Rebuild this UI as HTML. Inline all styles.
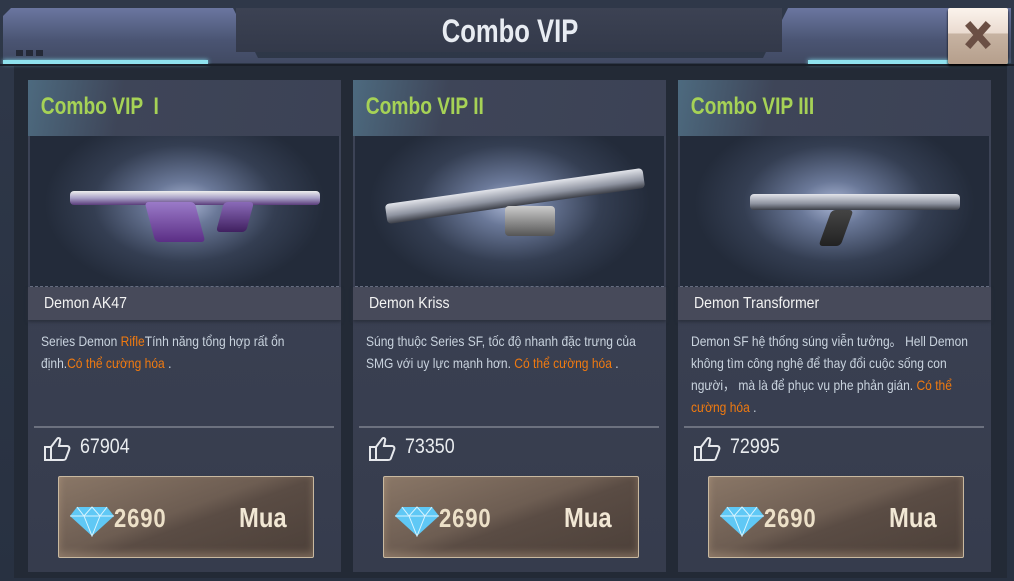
<!DOCTYPE html>
<html><head><meta charset="utf-8"><style>
*{margin:0;padding:0;box-sizing:border-box}
body{width:1014px;height:581px;overflow:hidden;background:#2b3444;font-family:"Liberation Sans Narrow","Liberation Sans",sans-serif;position:relative}
.frame{position:absolute;left:0;top:0;width:1014px;height:581px;background:linear-gradient(#2f3849,#283141)}
.topbar{position:absolute;left:3px;top:8px;width:1008px;height:55px;background:linear-gradient(#6b76a0,#4a5472 60%,#414a63);clip-path:polygon(0 8px,8px 0,230px 0,255px 50px,760px 50px,785px 0,1008px 0,1008px 55px,0 55px)}
.titlebg{position:absolute;left:236px;top:8px;width:546px;height:44px;background:linear-gradient(#3c4253,#33394a)}
.cyan{position:absolute;top:60px;height:4px;background:#8fe2ee;box-shadow:0 0 4px #7fd8ea}
.sep{position:absolute;left:0;top:64px;width:1014px;height:2px;background:#1a1f29}
.dots{position:absolute;top:50px;width:7px;height:6px;background:#252a37}
.title{position:absolute;left:380px;width:260px;top:13px;text-align:center;color:#e8ecf2;font-size:32px;font-weight:bold;transform:scaleX(.8)}
.close{position:absolute;left:948px;top:8px;width:60px;height:56px;background:linear-gradient(#fbf3ec,#eadbd0 45%,#c7b3a2 46%,#b59f8c);border-radius:2px;box-shadow:0 2px 2px #000}
.inner{position:absolute;left:14px;top:66px;width:993px;height:512px;background:#232a36}
.card{position:absolute;top:80px;width:313px;height:492px;background:linear-gradient(#3e4558,#3a4052 40%,#363c4d)}
.card .hd{height:56px;background:linear-gradient(100deg,#4d6a7f 0%,#3e4558 30%,#3c4255)}
.card .hd span{display:block;padding:13px 0 0 16px;color:#a6d256;font-size:24px;font-weight:bold;transform:scaleX(.8);transform-origin:left}
.img{height:151px;margin:0 2px;background:radial-gradient(ellipse 140px 90px at 50% 45%,#aab6d4 0%,#6a7898 25%,#343e52 65%,#232b3a 100%);border-bottom:1px dashed #666d80;position:relative;overflow:hidden}
.gun{position:absolute;background:linear-gradient(#e2e4ea,#8e93a0 60%,#3c3f48);border-radius:4px}
.nm{height:33px;background:#474a5a;color:#f3f3f3;font-size:16px;padding:8px 0 0 16px;box-shadow:0 2px 3px #2a2f3c}
.nm span{display:inline-block;transform:scaleX(.88);transform-origin:left}
.ds{padding:10px 0 0 13px;color:#c9d3de;font-size:14px;line-height:22px;height:106px;white-space:nowrap}
.ds span.w{display:inline-block;transform:scaleX(.86);transform-origin:left}
.o{color:#f07a10}
.line{margin:0 7px 0 6px;height:2px;background:#6c717f}
.lk{height:36px;color:#e9ecef;font-size:21px;padding:7px 0 0 52px;position:relative}
.lk b{display:inline-block;transform:scaleX(.85);transform-origin:left;font-weight:normal}
.lk svg{position:absolute;left:14px;top:5px}
.btn{position:absolute;left:30px;top:396px;width:256px;height:82px;border:1px solid #c9b9a0;border-radius:2px;background:linear-gradient(160deg,#8a7767 0%,#6d5d52 45%,#5a4c44 55%,#4c4039);box-shadow:inset 0 -4px 8px rgba(255,220,180,.25)}
.btn .p{position:absolute;left:55px;top:26px;color:#ece0c8;font-size:26px;font-weight:bold;letter-spacing:1px;transform:scaleX(.85);transform-origin:left}
.btn .m{position:absolute;left:180px;top:25px;color:#f1e7d4;font-size:28px;font-weight:bold;transform:scaleX(.85);transform-origin:left}
.btn svg{position:absolute;left:10px;top:26px}
</style></head><body>
<div class="frame"></div>
<div class="inner"></div>
<div class="topbar"></div>
<div class="titlebg"></div>
<div class="cyan" style="left:3px;width:205px"></div>
<div class="cyan" style="left:808px;width:200px"></div>
<div class="sep"></div>
<div class="dots" style="left:16px"></div><div class="dots" style="left:26px"></div><div class="dots" style="left:36px"></div>
<div class="title">Combo VIP</div>
<div class="close"><svg width="60" height="56"><path d="M22 18 L38 36 M38 18 L22 36" stroke="#6b4f44" stroke-width="7" stroke-linecap="square"/></svg></div>

<div class="card" style="left:28px">
<div class="hd"><span>Combo VIP &nbsp;I</span></div>
<div class="img"><div class="gun" style="left:40px;top:55px;width:250px;height:14px;background:linear-gradient(#eee,#a9a2c8 50%,#5a3c7a)"></div><div class="gun" style="left:120px;top:66px;width:50px;height:40px;background:linear-gradient(#9a7ac8,#5b2e85);transform:skewX(15deg)"></div><div class="gun" style="left:190px;top:66px;width:30px;height:30px;background:linear-gradient(#8a6ab8,#402060);transform:skewX(-15deg)"></div></div>
<div class="nm"><span>Demon AK47</span></div>
<div class="ds"><span class="w">Series Demon <span class="o">Rifle</span>Tính năng tổng hợp rất ổn<br>định.<span class="o">Có thể cường hóa</span> .</span></div>
<div class="line"></div>
<div class="lk"><svg width="30" height="30" viewBox="0 0 30 30"><path d="M3 14h6v13H3zM9 14l6-8c1-2 4-1 3 2l-1 5h8c2 0 3 2 2 4l-3 8c0 1-1 2-3 2H9" fill="none" stroke="#e6e8ec" stroke-width="2"/></svg><b>67904</b></div>
<div class="btn"><svg width="46" height="34" viewBox="0 0 46 34"><path d="M8 4h30l7 9-22 20L1 13z" fill="#5fc8f5"/><path d="M1 13h44M8 4l7 9 8 20 8-20 7-9M15 13l8-9 8 9" stroke="#d8f4ff" stroke-width="1" fill="none"/></svg><span class="p">2690</span><span class="m">Mua</span></div>
</div>

<div class="card" style="left:353px">
<div class="hd"><span>Combo VIP II</span></div>
<div class="img"><div class="gun" style="left:30px;top:50px;width:260px;height:20px;transform:rotate(-8deg)"></div><div class="gun" style="left:150px;top:70px;width:50px;height:30px;background:linear-gradient(#ccc,#555)"></div></div>
<div class="nm"><span>Demon Kriss</span></div>
<div class="ds"><span class="w">Súng thuộc Series SF, tốc độ nhanh đặc trưng của<br>SMG với uy lực mạnh hơn. <span class="o">Có thể cường hóa</span> .</span></div>
<div class="line"></div>
<div class="lk"><svg width="30" height="30" viewBox="0 0 30 30"><path d="M3 14h6v13H3zM9 14l6-8c1-2 4-1 3 2l-1 5h8c2 0 3 2 2 4l-3 8c0 1-1 2-3 2H9" fill="none" stroke="#e6e8ec" stroke-width="2"/></svg><b>73350</b></div>
<div class="btn"><svg width="46" height="34" viewBox="0 0 46 34"><path d="M8 4h30l7 9-22 20L1 13z" fill="#5fc8f5"/><path d="M1 13h44M8 4l7 9 8 20 8-20 7-9M15 13l8-9 8 9" stroke="#d8f4ff" stroke-width="1" fill="none"/></svg><span class="p">2690</span><span class="m">Mua</span></div>
</div>

<div class="card" style="left:678px">
<div class="hd"><span>Combo VIP III</span></div>
<div class="img"><div class="gun" style="left:70px;top:58px;width:210px;height:16px"></div><div class="gun" style="left:145px;top:74px;width:22px;height:36px;background:linear-gradient(#444,#222);transform:skewX(-20deg)"></div></div>
<div class="nm"><span>Demon Transformer</span></div>
<div class="ds"><span class="w">Demon SF hệ thống súng viễn tưởng。 Hell Demon<br>không tìm công nghệ để thay đổi cuộc sống con<br>người， mà là để phục vụ phe phản gián. <span class="o">Có thể</span><br><span class="o">cường hóa</span> .</span></div>
<div class="line"></div>
<div class="lk"><svg width="30" height="30" viewBox="0 0 30 30"><path d="M3 14h6v13H3zM9 14l6-8c1-2 4-1 3 2l-1 5h8c2 0 3 2 2 4l-3 8c0 1-1 2-3 2H9" fill="none" stroke="#e6e8ec" stroke-width="2"/></svg><b>72995</b></div>
<div class="btn"><svg width="46" height="34" viewBox="0 0 46 34"><path d="M8 4h30l7 9-22 20L1 13z" fill="#5fc8f5"/><path d="M1 13h44M8 4l7 9 8 20 8-20 7-9M15 13l8-9 8 9" stroke="#d8f4ff" stroke-width="1" fill="none"/></svg><span class="p">2690</span><span class="m">Mua</span></div>
</div>
</body></html>
